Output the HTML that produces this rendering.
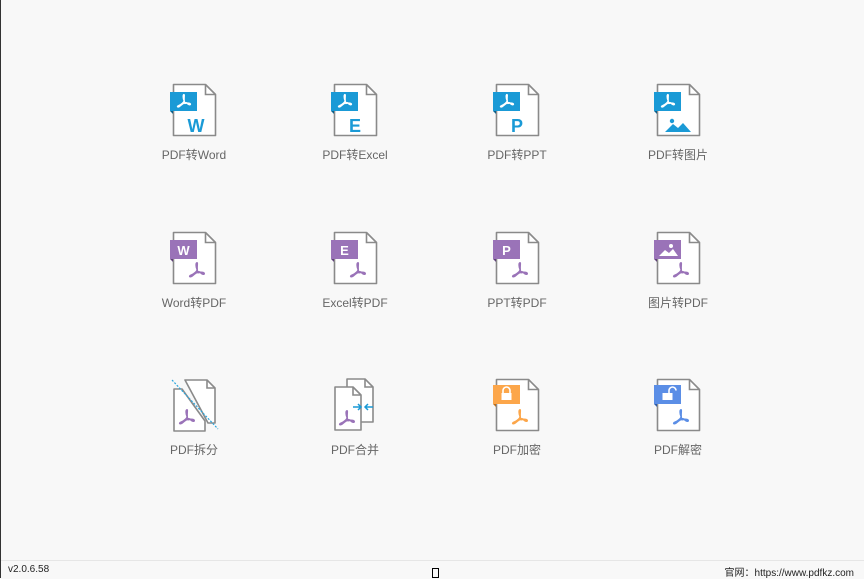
<!DOCTYPE html>
<html><head><meta charset="utf-8"><style>
html,body{margin:0;padding:0;}
body{width:864px;height:578px;background:#f8f8f8;position:relative;overflow:hidden;font-family:"Liberation Sans","Noto Sans CJK SC",sans-serif;border-left:1px solid #333;box-sizing:border-box;}
.it{position:absolute;width:100px;text-align:center;}
.it svg{display:block;margin:0 auto;}
.it .l{font-size:12px;color:#666;margin-top:8px;white-space:nowrap;}
.foot{position:absolute;left:0;right:0;top:560px;height:18px;border-top:1px solid #e6e6e6;background:#f8f8f8;font-size:10px;color:#222;}
</style></head><body>
<svg width="0" height="0" style="position:absolute">
<defs>
<symbol id="f" viewBox="0 0 52 56"><path d="M5.5 2.5H37.5L47.5 12.5V53.5H5.5Z" fill="#fff" stroke="#8a8a8a" stroke-width="1.6" stroke-linejoin="round"/><path d="M37.5 2.5V12.5H47.5" fill="none" stroke="#8a8a8a" stroke-width="1.6"/></symbol>
<symbol id="a" viewBox="-10 -10 20 20"><path d="M0 -8C-1.5 -8 -1 -3 0 -1C1 1 -4 5 -7 6C-9 7 -8 8 -6 7C-3 5 1 0 4 3C6 5 8 5 8 4C8 3 5 2 1 3C-1 -1 1 -8 0 -8Z" fill="none" stroke="currentColor" stroke-width="1.8" stroke-linejoin="round"/></symbol>
</defs></svg>

<!-- row 1 -->
<div class="it" style="left:143px;top:82px"><svg width="52" height="56" style="color:#fff"><use href="#f"/><path d="M2 10H29V29H2Z" fill="#1a9ad6"/><path d="M2 29H5V32Z" fill="#0c5f88"/><use href="#a" x="8" y="11" width="16" height="16"/><text x="28" y="50" text-anchor="middle" font-size="18" font-weight="bold" fill="#1a9ad6" font-family="Liberation Sans">W</text></svg><div class="l">PDF转Word</div></div>
<div class="it" style="left:304px;top:82px"><svg width="52" height="56" style="color:#fff"><use href="#f"/><path d="M2 10H29V29H2Z" fill="#1a9ad6"/><path d="M2 29H5V32Z" fill="#0c5f88"/><use href="#a" x="8" y="11" width="16" height="16"/><text x="26" y="50" text-anchor="middle" font-size="18" font-weight="bold" fill="#1a9ad6" font-family="Liberation Sans">E</text></svg><div class="l">PDF转Excel</div></div>
<div class="it" style="left:466px;top:82px"><svg width="52" height="56" style="color:#fff"><use href="#f"/><path d="M2 10H29V29H2Z" fill="#1a9ad6"/><path d="M2 29H5V32Z" fill="#0c5f88"/><use href="#a" x="8" y="11" width="16" height="16"/><text x="26" y="50" text-anchor="middle" font-size="18" font-weight="bold" fill="#1a9ad6" font-family="Liberation Sans">P</text></svg><div class="l">PDF转PPT</div></div>
<div class="it" style="left:627px;top:82px"><svg width="52" height="56" style="color:#fff"><use href="#f"/><path d="M2 10H29V29H2Z" fill="#1a9ad6"/><path d="M2 29H5V32Z" fill="#0c5f88"/><use href="#a" x="8" y="11" width="16" height="16"/><circle cx="20" cy="39" r="2.2" fill="#1a9ad6"/><path d="M13 50L21 42L26 46L31 41L39 50Z" fill="#1a9ad6"/></svg><div class="l">PDF转图片</div></div>

<!-- row 2 -->
<div class="it" style="left:143px;top:230px"><svg width="52" height="56" style="color:#9a73b8"><use href="#f"/><path d="M2 10H29V29H2Z" fill="#9a73b8"/><path d="M2 29H5V32Z" fill="#5e3f78"/><text x="15.5" y="25" text-anchor="middle" font-size="13" font-weight="bold" fill="#fff" font-family="Liberation Sans">W</text><use href="#a" x="20" y="31" width="18" height="18"/></svg><div class="l">Word转PDF</div></div>
<div class="it" style="left:304px;top:230px"><svg width="52" height="56" style="color:#9a73b8"><use href="#f"/><path d="M2 10H29V29H2Z" fill="#9a73b8"/><path d="M2 29H5V32Z" fill="#5e3f78"/><text x="15.5" y="25" text-anchor="middle" font-size="13" font-weight="bold" fill="#fff" font-family="Liberation Sans">E</text><use href="#a" x="20" y="31" width="18" height="18"/></svg><div class="l">Excel转PDF</div></div>
<div class="it" style="left:466px;top:230px"><svg width="52" height="56" style="color:#9a73b8"><use href="#f"/><path d="M2 10H29V29H2Z" fill="#9a73b8"/><path d="M2 29H5V32Z" fill="#5e3f78"/><text x="15.5" y="25" text-anchor="middle" font-size="13" font-weight="bold" fill="#fff" font-family="Liberation Sans">P</text><use href="#a" x="20" y="31" width="18" height="18"/></svg><div class="l">PPT转PDF</div></div>
<div class="it" style="left:627px;top:230px"><svg width="52" height="56" style="color:#9a73b8"><use href="#f"/><path d="M2 10H29V29H2Z" fill="#9a73b8"/><path d="M2 29H5V32Z" fill="#5e3f78"/><circle cx="19" cy="16" r="2" fill="#fff"/><path d="M7 26L13 20L17 23L21 19L26 26Z" fill="#fff"/><use href="#a" x="20" y="31" width="18" height="18"/></svg><div class="l">图片转PDF</div></div>

<!-- row 3 -->
<div class="it" style="left:143px;top:377px"><svg width="52" height="56" style="color:#9a73b8"><path d="M17 3H39L47 11V46H40Z" fill="#fff" stroke="#8a8a8a" stroke-width="1.6" stroke-linejoin="round"/><path d="M39 3V11H47" fill="none" stroke="#8a8a8a" stroke-width="1.6"/><path d="M6 12H14L37 44V54H6Z" fill="#fff" stroke="#8a8a8a" stroke-width="1.6" stroke-linejoin="round"/><path d="M4 3L50 52" stroke="#2aa6dd" stroke-width="1.2" stroke-dasharray="2 1.5"/><use href="#a" x="10" y="31" width="18" height="18"/></svg><div class="l">PDF拆分</div></div>
<div class="it" style="left:304px;top:377px"><svg width="52" height="56" style="color:#9a73b8"><path d="M18 2H36L44 10V45H18Z" fill="#fff" stroke="#8a8a8a" stroke-width="1.6" stroke-linejoin="round"/><path d="M36 2V10H44" fill="none" stroke="#8a8a8a" stroke-width="1.6"/><path d="M6 10H24L32 18V53H6Z" fill="#fff" stroke="#8a8a8a" stroke-width="1.6" stroke-linejoin="round"/><path d="M24 10V18H32" fill="none" stroke="#8a8a8a" stroke-width="1.6"/><path d="M24 30H32M29 27L32 30L29 33M44 30H36M39 27L36 30L39 33" fill="none" stroke="#1a9ad6" stroke-width="1.5"/><use href="#a" x="9" y="32" width="18" height="18"/></svg><div class="l">PDF合并</div></div>
<div class="it" style="left:466px;top:377px"><svg width="52" height="56" style="color:#fca64a"><use href="#f"/><path d="M2 8H29V27H2Z" fill="#fca64a"/><path d="M2 27H5V30Z" fill="#b96d1c"/><path d="M12 16V13.5A3.5 3.5 0 0 1 19 13.5V16" fill="none" stroke="#fff" stroke-width="1.6"/><rect x="10.5" y="16" width="10" height="7" fill="#fff"/><use href="#a" x="20" y="31" width="18" height="18"/></svg><div class="l">PDF加密</div></div>
<div class="it" style="left:627px;top:377px"><svg width="52" height="56" style="color:#5b8ee6"><use href="#f"/><path d="M2 8H29V27H2Z" fill="#5b8ee6"/><path d="M2 27H5V30Z" fill="#2c5aa6"/><path d="M17 16V13.5A3.5 3.5 0 0 1 24 13.5" fill="none" stroke="#fff" stroke-width="1.6"/><rect x="10.5" y="16" width="10" height="7" fill="#fff"/><use href="#a" x="20" y="31" width="18" height="18"/></svg><div class="l">PDF解密</div></div>

<div class="foot">
<span style="position:absolute;left:7px;top:3px;">v2.0.6.58</span>
<span style="position:absolute;left:431px;top:7px;width:5px;height:8px;border:1px solid #000;"></span>
<span style="position:absolute;right:10px;top:3px;">官网：https://www.pdfkz.com</span>
</div>
</body></html>
